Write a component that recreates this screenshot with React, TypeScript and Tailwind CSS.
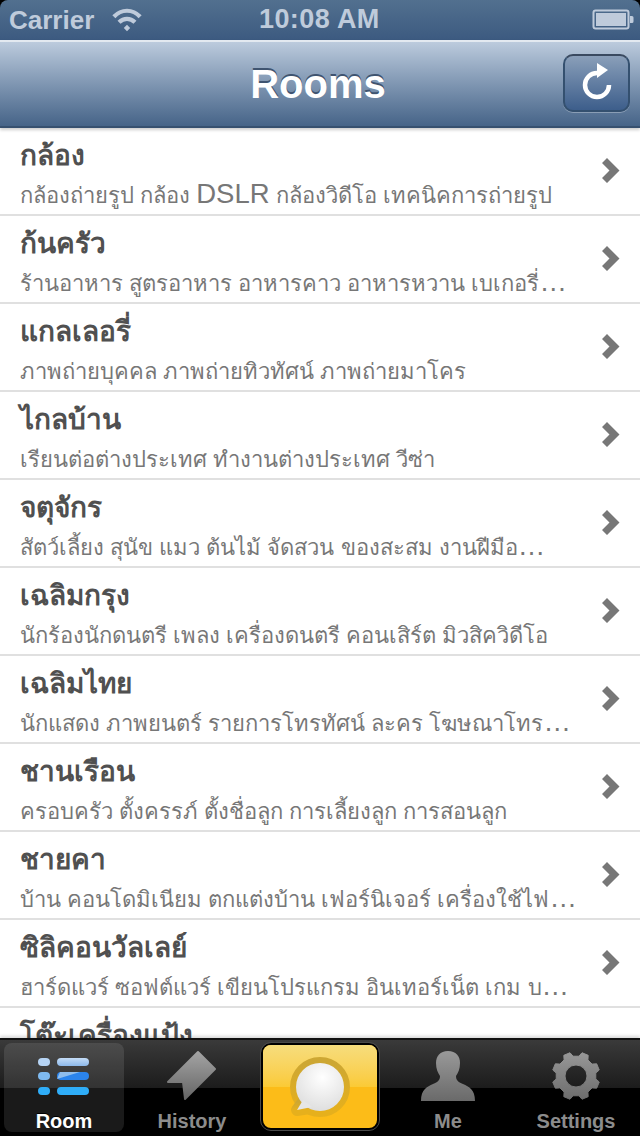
const rooms = [
  ["กล้อง", "กล้องถ่ายรูป กล้อง DSLR กล้องวิดีโอ เทคนิคการถ่ายรูป"],
  ["ก้นครัว", "ร้านอาหาร สูตรอาหาร อาหารคาว อาหารหวาน เบเกอรี่…"],
  ["แกลเลอรี่", "ภาพถ่ายบุคคล ภาพถ่ายทิวทัศน์ ภาพถ่ายมาโคร"],
  ["ไกลบ้าน", "เรียนต่อต่างประเทศ ทำงานต่างประเทศ วีซ่า"],
  ["จตุจักร", "สัตว์เลี้ยง สุนัข แมว ต้นไม้ จัดสวน ของสะสม งานฝีมือ…"],
  ["เฉลิมกรุง", "นักร้องนักดนตรี เพลง เครื่องดนตรี คอนเสิร์ต มิวสิควิดีโอ"],
  ["เฉลิมไทย", "นักแสดง ภาพยนตร์ รายการโทรทัศน์ ละคร โฆษณาโทร…"],
  ["ชานเรือน", "ครอบครัว ตั้งครรภ์ ตั้งชื่อลูก การเลี้ยงลูก การสอนลูก"],
  ["ชายคา", "บ้าน คอนโดมิเนียม ตกแต่งบ้าน เฟอร์นิเจอร์ เครื่องใช้ไฟ…"],
  ["ซิลิคอนวัลเลย์", "ฮาร์ดแวร์ ซอฟต์แวร์ เขียนโปรแกรม อินเทอร์เน็ต เกม บ…"],
  ["โต๊ะเครื่องแป้ง", ""],
];

function StatusBar() {
  return (
    <div className="h-10 shrink-0 flex items-center justify-between pl-[9px] pr-[6px] rounded-t-[8px] bg-gradient-to-b from-[#52708f] to-[#3c5a80] text-[#bfcbdb] font-bold relative">
      <div className="flex items-center gap-[18px]">
        <span className="text-[26px] leading-none">Carrier</span>
        <svg width="30" height="26" viewBox="0 0 32 26" fill="none" stroke="#bfcbdb" strokeWidth="4.500">
          <path d="M2 9.500C10 1 22 1 30 9.500" />
          <path d="M7.500 15.500C12.500 10.500 19.500 10.500 24.500 15.500" />
          <path d="M14 21.500L16 19.500L18 21.500L16 23.500Z" fill="#bfcbdb" strokeWidth="2" />
        </svg>
      </div>
      <span className="absolute left-[259px] top-[4px] text-[27px] tracking-[0.4px] leading-[30px]">10:08 AM</span>
      <svg width="42" height="22" viewBox="0 0 42 22">
        <rect x="1.500" y="1.500" width="35" height="18" rx="2" fill="none" stroke="#bfcbdb" strokeWidth="2" />
        <rect x="4" y="4" width="30" height="13" fill="#bfcbdb" />
        <path d="M38 7h2a1.500 1.500 0 0 1 1.500 1.500v4a1.500 1.500 0 0 1-1.500 1.500h-2z" fill="#bfcbdb" />
      </svg>
    </div>
  );
}

function NavBar() {
  return (
    <div className="h-[88px] shrink-0 relative flex items-center justify-center pr-[4px] border-t-2 border-b-2 border-t-[#e3e9f0] border-b-[#36506f] bg-gradient-to-b from-[#bccbdd] to-[#466488] shadow-[0_2px_3px_rgba(0,0,0,0.2)] z-10">
      <h1 className="font-bold text-[40px] leading-none text-white [text-shadow:0_-2px_0_#3f5470]">Rooms</h1>
      <button className="absolute left-[563px] top-[12px] w-[67px] h-[58px] pb-[6px] rounded-[10px] border-2 border-[#34506f] border-t-[#3a4a60] bg-gradient-to-b from-[#8a9fb9] to-[#3d5e8b] shadow-[0_1px_0_rgba(255,255,255,0.3)] flex items-center justify-center">
        <svg width="36" height="40" viewBox="0 0 36 40" fill="none">
          <path d="M18 13A12 12 0 1 0 30 25" stroke="white" strokeWidth="4.500" />
          <path d="M18 3L29 10L18 18Z" fill="white" />
        </svg>
      </button>
    </div>
  );
}

// Latin words and the ellipsis come out larger than the Thai in this list
function Sub({ text }: { text: string }) {
  const parts = text.split(/(DSLR|…)/);
  return (
    <div className="pt-[2px] text-[22px] leading-[37px] text-[#777777] whitespace-nowrap">
      {parts.map((part, i) =>
        part === "DSLR" || part === "…" ? (
          <span key={i} className="text-[27.5px] leading-none">
            {part}
          </span>
        ) : (
          part
        ),
      )}
    </div>
  );
}

function Row({ title, sub }: { title: string; sub: string }) {
  return (
    <div className="h-[88px] shrink-0 relative border-b-2 border-[#e0e0e0] pl-5 pr-[60px] bg-white overflow-hidden">
      <div className="pt-[9px] text-[28px] leading-[38px] font-bold text-[#505050] whitespace-nowrap">{title}</div>
      <Sub text={sub} />
      <svg className="absolute left-[602px] top-[30px]" width="18" height="26" viewBox="0 0 18 26">
        <path d="M0 5L5 0L17.500 12.500L5 25L0 20L7.500 12.500Z" fill="#777777" />
      </svg>
    </div>
  );
}

function TabLabel({ children, active }: { children: string; active?: boolean }) {
  return (
    <span className={`block text-[20px] leading-[20px] font-bold [text-shadow:0_-1px_0_#000] ${active ? "text-white" : "text-[#8c8c8c]"}`}>
      {children}
    </span>
  );
}

function RoomIcon() {
  return (
    <svg width="54" height="37" viewBox="0 0 54 37">
      <defs>
        <linearGradient id="rowA" x1="0" y1="0" x2="0" y2="1">
          <stop offset="0" stopColor="#c4dcf6" />
          <stop offset="1" stopColor="#8db9ea" />
        </linearGradient>
      </defs>
      <rect x="1" y="0" width="12" height="8" rx="4" fill="#b6d4f4" />
      <rect x="20" y="0" width="32" height="8" rx="4" fill="url(#rowA)" />
      <rect x="1" y="14" width="12" height="8" rx="4" fill="#7fbaf0" />
      <rect x="20" y="14" width="32" height="8" rx="4" fill="#2b84ec" />
      <path d="M23 14h20L20 21z" fill="#8fbdec" />
      <rect x="1" y="29" width="12" height="8" rx="4" fill="#2fadf8" />
      <rect x="20" y="29" width="32" height="8" rx="4" fill="#2fadf8" />
    </svg>
  );
}

function HistoryIcon() {
  return (
    <svg width="52" height="52" viewBox="0 0 52 52">
      <defs>
        <linearGradient id="grayA" x1="0" y1="0" x2="0" y2="1">
          <stop offset="0" stopColor="#a3a3a3" />
          <stop offset="1" stopColor="#666666" />
        </linearGradient>
      </defs>
      <path d="M32 2L49 19L19 49L17 32H2Z" fill="url(#grayA)" stroke="url(#grayA)" strokeWidth="2" strokeLinejoin="round" />
    </svg>
  );
}

function MeIcon() {
  return (
    <svg width="54" height="52" viewBox="0 0 54 52">
      <defs>
        <linearGradient id="grayB" x1="0" y1="0" x2="0" y2="1">
          <stop offset="0" stopColor="#999999" />
          <stop offset="1" stopColor="#6a6a6a" />
        </linearGradient>
      </defs>
      <path d="M27 1C35 1 39 6 39 13C39 19 37 23 35 26C35 30 37 32 42 34C48 37 54 39 54 51H0C0 39 6 37 12 34C17 32 19 30 19 26C17 23 15 19 15 13C15 6 19 1 27 1Z" fill="url(#grayB)" />
    </svg>
  );
}

function gearPath() {
  const pts: string[] = [];
  for (let i = 0; i < 8; i++) {
    const mid = ((i * 45 + 22.5 - 90) * Math.PI) / 180;
    const spec: [number, number][] = [
      [-14, 20],
      [-8, 24],
      [8, 24],
      [14, 20],
    ];
    for (const [deg, r] of spec) {
      const a = mid + (deg * Math.PI) / 180;
      pts.push(`${(26 + r * Math.cos(a)).toFixed(2)} ${(26 + r * Math.sin(a)).toFixed(2)}`);
    }
  }
  return `M${pts.join("L")}Z`;
}

function GearIcon() {
  return (
    <svg width="52" height="52" viewBox="0 0 52 52">
      <defs>
        <linearGradient id="grayC" gradientUnits="userSpaceOnUse" x1="0" y1="0" x2="0" y2="52">
          <stop offset="0" stopColor="#9a9a9a" />
          <stop offset="1" stopColor="#6a6a6a" />
        </linearGradient>
      </defs>
      <path
        d={`${gearPath()}M37 26A11 11 0 1 0 15 26A11 11 0 1 0 37 26Z`}
        fill="url(#grayC)"
        fillRule="evenodd"
        stroke="url(#grayC)"
        strokeWidth="1"
        strokeLinejoin="round"
      />
    </svg>
  );
}

function BubbleIcon() {
  return (
    <svg width="74" height="74" viewBox="0 0 74 74">
      <defs>
        <radialGradient id="bubble" cx="0.55" cy="0.3" r="0.8">
          <stop offset="0" stopColor="#ffffff" />
          <stop offset="1" stopColor="#dadada" />
        </radialGradient>
        <linearGradient id="ring" x1="0" y1="0" x2="0" y2="1">
          <stop offset="0" stopColor="#cda733" />
          <stop offset="1" stopColor="#e6b01c" />
        </linearGradient>
      </defs>
      <g fill="url(#ring)" stroke="url(#ring)" strokeWidth="12" strokeLinejoin="round">
        <circle cx="37" cy="37" r="24" />
        <path d="M20 52L14 60L27 58Z" />
      </g>
      <circle cx="37" cy="37" r="24" fill="url(#bubble)" />
      <path d="M20 50L14 60L29 57Z" fill="#e6e6e6" />
    </svg>
  );
}

function TabBar() {
  return (
    <div className="absolute left-0 right-0 top-[1038px] h-[98px] bg-black border-t-2 border-[#111111] flex items-stretch shadow-[0_-2px_3px_rgba(0,0,0,0.15)]">
      <div className="absolute inset-x-0 top-0 h-[48px] bg-gradient-to-b from-[#3a3a3a] to-[#1c1c1c]" />
      <div className="relative w-[128px] flex justify-center items-start pt-[3px]">
        <div className="w-[120px] h-[89px] rounded-[8px] bg-white/10 flex flex-col items-center pt-[15px]">
          <RoomIcon />
          <div className="mt-[16px]">
            <TabLabel active>Room</TabLabel>
          </div>
        </div>
      </div>
      <div className="relative w-[128px] flex flex-col items-center pt-[10px]">
        <HistoryIcon />
        <div className="mt-[9px]">
          <TabLabel>History</TabLabel>
        </div>
      </div>
      <div className="relative w-[128px] flex justify-center items-start pt-[3px]">
        <div className="w-[118px] h-[87px] rounded-[10px] border-2 border-black outline outline-1 outline-[#4a4a4a] overflow-hidden bg-[#fcbc18] flex items-center justify-center relative">
          <div className="absolute inset-x-0 top-0 h-[42px] bg-gradient-to-b from-[#f6dd7c] to-[#fbca34]" />
          <div className="relative">
            <BubbleIcon />
          </div>
        </div>
      </div>
      <div className="relative w-[128px] flex flex-col items-center pt-[10px]">
        <MeIcon />
        <div className="mt-[9px]">
          <TabLabel>Me</TabLabel>
        </div>
      </div>
      <div className="relative w-[128px] flex flex-col items-center pt-[10px]">
        <GearIcon />
        <div className="mt-[9px]">
          <TabLabel>Settings</TabLabel>
        </div>
      </div>
    </div>
  );
}

export default function App() {
  return (
    <div className="w-[640px] h-[1136px] relative overflow-hidden flex flex-col bg-black font-['Liberation_Sans','Noto_Sans',sans-serif]">
      <StatusBar />
      <NavBar />
      <div className="flex flex-col flex-1 overflow-hidden">
        {rooms.map(([title, sub]) => (
          <Row key={title} title={title} sub={sub} />
        ))}
      </div>
      <TabBar />
    </div>
  );
}
